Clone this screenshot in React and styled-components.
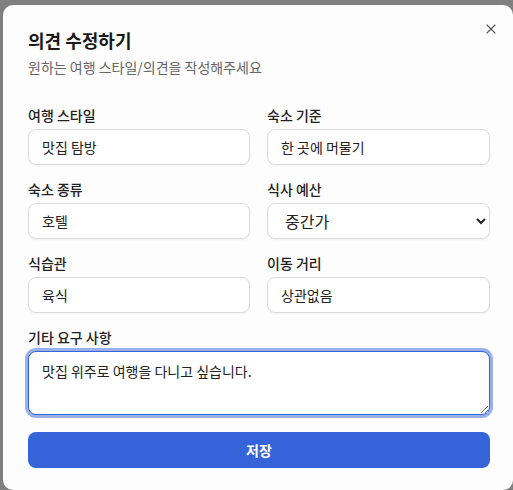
import React from "react";
import styled, { createGlobalStyle } from "styled-components";
import { X } from "lucide-react";

const GlobalStyle = createGlobalStyle`
  html, body {
    margin: 0;
    padding: 0;
    background: #808080;
    overflow: hidden;
  }
  body {
    font-family: "Noto Sans CJK KR", "Noto Sans", sans-serif;
  }
`;

const Dialog = styled.div`
  position: relative;
  box-sizing: border-box;
  margin: 5px 0 0 3px;
  width: 510px;
  height: 485px;
  padding: 22px 23px 0 25px;
  background: #fdfdfd;
  border-radius: 10px;
`;

const CloseButton = styled.button`
  position: absolute;
  top: 16px;
  right: 14px;
  width: 16px;
  height: 16px;
  padding: 0;
  border: none;
  background: none;
  color: #555;
  display: flex;
  cursor: pointer;
`;

const Title = styled.h2`
  margin: 0;
  font-size: 18px;
  line-height: 26px;
  font-weight: 700;
  color: #1a1a1a;
`;

const Subtitle = styled.p`
  margin: 4px 0 0;
  font-size: 14px;
  line-height: 20px;
  color: #666;
`;

const Form = styled.form`
  margin-top: 28px;
  display: flex;
  flex-direction: column;
  gap: 14px;
`;

const Grid = styled.div`
  display: grid;
  grid-template-columns: 222px 223px;
  column-gap: 17px;
  row-gap: 14px;
`;

const Field = styled.label`
  display: flex;
  flex-direction: column;
  gap: 4px;
`;

const Label = styled.span`
  font-size: 14px;
  line-height: 20px;
  font-weight: 500;
  color: #222;
`;

const controlBase = `
  box-sizing: border-box;
  width: 100%;
  height: 36px;
  padding: 0 13px;
  border: 1px solid #dcdcdc;
  border-radius: 8px;
  background: #fff;
  box-shadow: 0 1px 2px rgba(0, 0, 0, 0.05);
  font-family: "Noto Sans CJK KR", "Noto Sans", sans-serif;
  color: #222;
  outline: none;
`;

const Input = styled.input`
  ${controlBase}
  font-size: 14px;
`;

const Select = styled.select`
  ${controlBase}
  font-size: 16px;
`;

const TextArea = styled.textarea`
  ${controlBase}
  height: 64px;
  padding: 9px 13px;
  font-size: 14px;
  line-height: 20px;
  resize: vertical;
  border-color: #3563d9;
  box-shadow: 0 0 0 3px rgba(53, 99, 217, 0.5);
`;

const SaveButton = styled.button`
  margin-top: 3px;
  height: 36px;
  border: none;
  border-radius: 8px;
  background: #3563d9;
  color: #fff;
  font-family: "Noto Sans CJK KR", "Noto Sans", sans-serif;
  font-size: 14px;
  font-weight: 700;
  cursor: pointer;
`;

const fields = [
  { label: "여행 스타일", value: "맛집 탐방" },
  { label: "숙소 기준", value: "한 곳에 머물기" },
  { label: "숙소 종류", value: "호텔" },
  { label: "식사 예산", value: "중간가", options: ["저렴", "중간가", "고급"] },
  { label: "식습관", value: "육식" },
  { label: "이동 거리", value: "상관없음" },
];

export default function App() {
  return (
    <>
      <GlobalStyle />
      <Dialog>
        <CloseButton type="button" aria-label="닫기">
          <X size={16} strokeWidth={1.6} />
        </CloseButton>
        <Title>의견 수정하기</Title>
        <Subtitle>원하는 여행 스타일/의견을 작성해주세요</Subtitle>
        <Form onSubmit={(e) => e.preventDefault()}>
          <Grid>
            {fields.map((f) => (
              <Field key={f.label}>
                <Label>{f.label}</Label>
                {f.options ? (
                  <Select defaultValue={f.value}>
                    {f.options.map((o) => (
                      <option key={o}>{o}</option>
                    ))}
                  </Select>
                ) : (
                  <Input defaultValue={f.value} />
                )}
              </Field>
            ))}
          </Grid>
          <Field>
            <Label>기타 요구 사항</Label>
            <TextArea defaultValue="맛집 위주로 여행을 다니고 싶습니다." />
          </Field>
          <SaveButton type="submit">저장</SaveButton>
        </Form>
      </Dialog>
    </>
  );
}
